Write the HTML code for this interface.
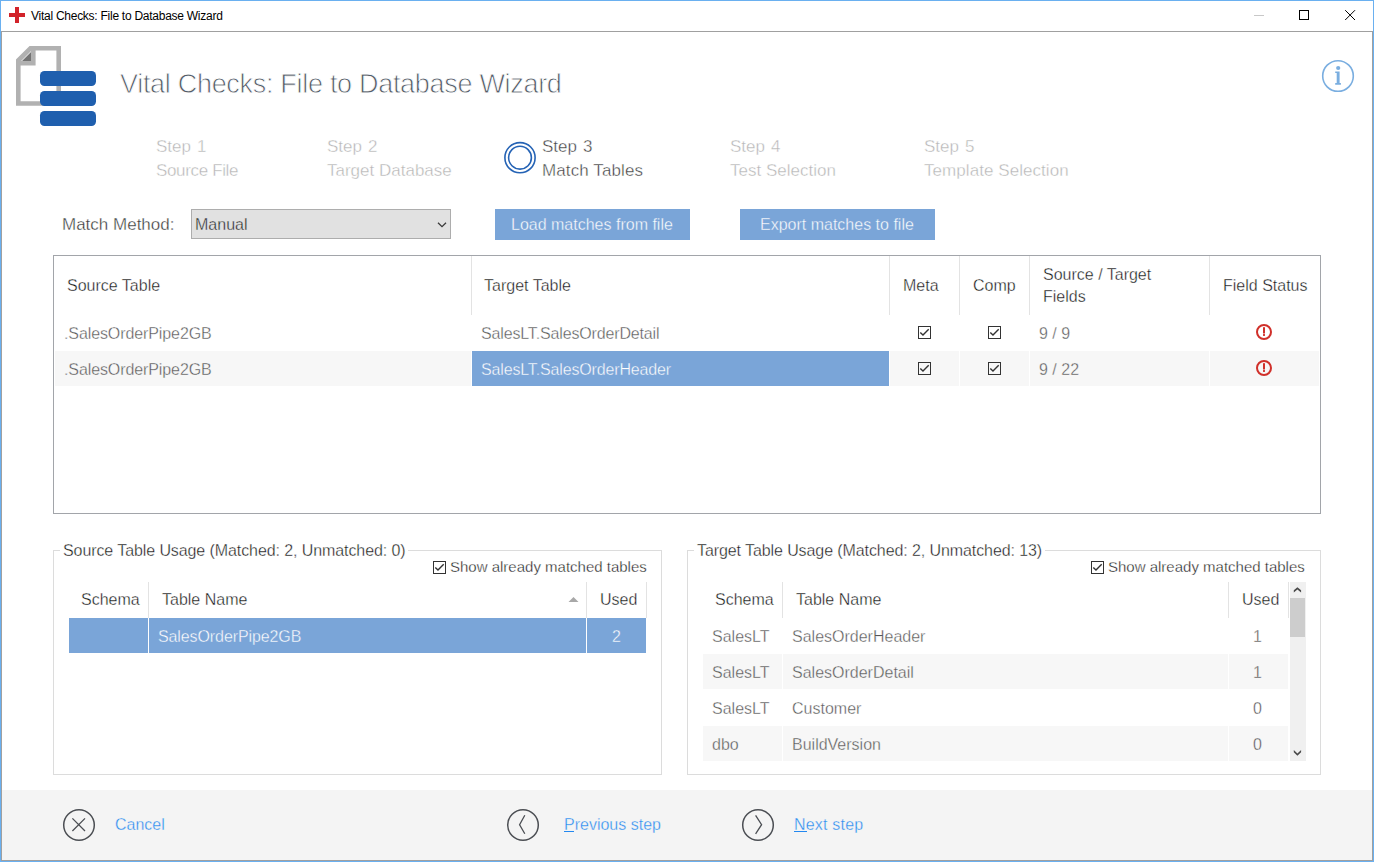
<!DOCTYPE html>
<html><head><meta charset="utf-8">
<style>
html,body{margin:0;padding:0;}
body{width:1374px;height:862px;position:relative;overflow:hidden;background:#fff;font-family:"Liberation Sans",sans-serif;}
.a{position:absolute;}
.t{position:absolute;white-space:nowrap;line-height:1;}
svg.a{overflow:visible;}
</style></head><body>
<div class="a" style="left:0px;top:0px;width:1374px;height:1px;background:#6ab0f0;"></div>
<div class="a" style="left:0px;top:0px;width:1px;height:862px;background:#6ab0f0;"></div>
<div class="a" style="left:1373px;top:0px;width:1px;height:862px;background:#6ab0f0;"></div>
<div class="a" style="left:0px;top:861px;width:1374px;height:1px;background:#6ab0f0;"></div>
<div class="a" style="left:1px;top:31px;width:1372px;height:1px;background:#a0a0a0;"></div>
<div class="a" style="left:1px;top:31px;width:1px;height:830px;background:#a0a0a0;"></div>
<div class="a" style="left:1372px;top:31px;width:1px;height:830px;background:#a0a0a0;"></div>
<div class="a" style="left:1px;top:860px;width:1372px;height:1px;background:#a0a0a0;"></div>
<div class="a" style="left:15px;top:7px;width:4px;height:16px;background:#d2232a;"></div>
<div class="a" style="left:9px;top:13px;width:16px;height:4px;background:#d2232a;"></div>
<div class="t" style="left:31px;top:10px;font-size:12px;color:#000;letter-spacing:-0.26px;">Vital Checks: File to Database Wizard</div>
<div class="a" style="left:1254px;top:15px;width:10px;height:1px;background:#c8c8c8;"></div>
<div class="a" style="left:1299px;top:10px;width:8px;height:8px;border:1px solid #000"></div>
<svg class="a" style="left:1344px;top:9px" width="12" height="12" viewBox="0 0 12 12"><path d="M1.2 1.2 L11 11 M11 1.2 L1.2 11" stroke="#000" stroke-width="1" fill="none"/></svg>
<svg class="a" style="left:0;top:32px" width="110" height="100" viewBox="0 32 110 100">
<path d="M18.3 60.5 L30.5 48.3 L58.7 48.3 L58.7 103.5 L18.3 103.5 Z" fill="none" stroke="#b1b1b1" stroke-width="4.6"/>
<path d="M22 61 L31 52 L31 61 Z" fill="#747474"/>
<path d="M33.3 48 L33.3 63.3 L18 63.3" fill="none" stroke="#b1b1b1" stroke-width="4.6"/>
<rect x="40" y="71" width="56" height="15" rx="4.5" fill="#1f5fae"/>
<rect x="40" y="91" width="56" height="15" rx="4.5" fill="#1f5fae"/>
<rect x="40" y="111" width="56" height="15" rx="4.5" fill="#1f5fae"/>
</svg>
<div class="t" style="left:120px;top:71px;font-size:27px;color:#535b66;letter-spacing:-0.3px;-webkit-text-stroke:0.8px #fff;">Vital Checks: File to Database Wizard</div>
<svg class="a" style="left:1320px;top:58px" width="36" height="36" viewBox="0 0 36 36">
<circle cx="18" cy="18" r="15.3" fill="none" stroke="#7aaee0" stroke-width="1.6"/>
<circle cx="18.2" cy="10" r="2.1" fill="#7aaee0"/>
<path d="M15.2 13.4 L19.6 13.4 L19.6 24.9 L20.9 24.9 L20.9 26.7 L15.2 26.7 L15.2 24.9 L16.7 24.9 L16.7 15 L15.2 15 Z" fill="#7aaee0"/>
</svg>
<div class="t" style="left:156px;top:138px;font-size:17px;color:#b4b4b4;-webkit-text-stroke:0.4px #fff;">Step</div>
<div class="t" style="left:197px;top:138px;font-size:17px;color:#b4b4b4;-webkit-text-stroke:0.4px #fff;">1</div>
<div class="t" style="left:156px;top:162px;font-size:17px;color:#b4b4b4;letter-spacing:-0.35px;-webkit-text-stroke:0.4px #fff;">Source File</div>
<div class="t" style="left:327px;top:138px;font-size:17px;color:#b4b4b4;-webkit-text-stroke:0.4px #fff;">Step</div>
<div class="t" style="left:368px;top:138px;font-size:17px;color:#b4b4b4;-webkit-text-stroke:0.4px #fff;">2</div>
<div class="t" style="left:327px;top:162px;font-size:17px;color:#b4b4b4;-webkit-text-stroke:0.4px #fff;">Target Database</div>
<div class="t" style="left:542px;top:138px;font-size:17px;color:#3a3a3a;-webkit-text-stroke:0.4px #fff;">Step</div>
<div class="t" style="left:583px;top:138px;font-size:17px;color:#3a3a3a;-webkit-text-stroke:0.4px #fff;">3</div>
<div class="t" style="left:542px;top:162px;font-size:17px;color:#3a3a3a;letter-spacing:0.1px;-webkit-text-stroke:0.4px #fff;">Match Tables</div>
<div class="t" style="left:730px;top:138px;font-size:17px;color:#b4b4b4;-webkit-text-stroke:0.4px #fff;">Step</div>
<div class="t" style="left:771px;top:138px;font-size:17px;color:#b4b4b4;-webkit-text-stroke:0.4px #fff;">4</div>
<div class="t" style="left:730px;top:162px;font-size:17px;color:#b4b4b4;-webkit-text-stroke:0.4px #fff;">Test Selection</div>
<div class="t" style="left:924px;top:138px;font-size:17px;color:#b4b4b4;-webkit-text-stroke:0.4px #fff;">Step</div>
<div class="t" style="left:965px;top:138px;font-size:17px;color:#b4b4b4;-webkit-text-stroke:0.4px #fff;">5</div>
<div class="t" style="left:924px;top:162px;font-size:17px;color:#b4b4b4;letter-spacing:0.06px;-webkit-text-stroke:0.4px #fff;">Template Selection</div>
<svg class="a" style="left:500px;top:138px" width="40" height="40" viewBox="0 0 40 40">
<circle cx="20" cy="19.7" r="15.1" fill="none" stroke="#2563b5" stroke-width="1.6"/>
<circle cx="20" cy="19.7" r="11.4" fill="none" stroke="#2563b5" stroke-width="1.6"/>
</svg>
<div class="t" style="left:62px;top:216px;font-size:17px;color:#333;-webkit-text-stroke:0.35px #fff;">Match Method:</div>
<div class="a" style="left:191px;top:209px;width:258px;height:28px;border:1px solid #adadad;background:#e1e1e1"></div>
<div class="t" style="left:195px;top:217px;font-size:16px;color:#222;-webkit-text-stroke:0.35px #e1e1e1;">Manual</div>
<svg class="a" style="left:436px;top:219px" width="12" height="10" viewBox="0 0 12 10"><path d="M2 3.8 L6 7.6 L10 3.8" fill="none" stroke="#3a3a3a" stroke-width="1.3"/></svg>
<div class="a" style="left:495px;top:209px;width:195px;height:31px;background:#7aa5d8;"></div>
<div class="t" style="left:511px;top:217px;font-size:16px;color:#fff;-webkit-text-stroke:0.35px #7aa5d8;">Load matches from file</div>
<div class="a" style="left:740px;top:209px;width:195px;height:31px;background:#7aa5d8;"></div>
<div class="t" style="left:760px;top:217px;font-size:16px;color:#fff;-webkit-text-stroke:0.35px #7aa5d8;">Export matches to file</div>
<div class="a" style="left:53px;top:255px;width:1266px;height:257px;border:1px solid #a2a5aa;background:#fff"></div>
<div class="a" style="left:471px;top:256px;width:1px;height:59px;background:#e3e3e3;"></div>
<div class="a" style="left:889px;top:256px;width:1px;height:59px;background:#e3e3e3;"></div>
<div class="a" style="left:959px;top:256px;width:1px;height:59px;background:#e3e3e3;"></div>
<div class="a" style="left:1029px;top:256px;width:1px;height:59px;background:#e3e3e3;"></div>
<div class="a" style="left:1209px;top:256px;width:1px;height:59px;background:#e3e3e3;"></div>
<div class="t" style="left:67px;top:278px;font-size:16px;color:#111;-webkit-text-stroke:0.35px #fff;">Source Table</div>
<div class="t" style="left:484px;top:278px;font-size:16px;color:#111;-webkit-text-stroke:0.35px #fff;">Target Table</div>
<div class="t" style="left:903px;top:278px;font-size:16px;color:#111;-webkit-text-stroke:0.35px #fff;">Meta</div>
<div class="t" style="left:973px;top:278px;font-size:16px;color:#111;-webkit-text-stroke:0.35px #fff;">Comp</div>
<div class="t" style="left:1043px;top:267px;font-size:16px;color:#111;-webkit-text-stroke:0.35px #fff;">Source / Target</div>
<div class="t" style="left:1043px;top:289px;font-size:16px;color:#111;-webkit-text-stroke:0.35px #fff;">Fields</div>
<div class="t" style="left:1223px;top:278px;font-size:16px;color:#111;-webkit-text-stroke:0.35px #fff;">Field Status</div>
<div class="a" style="left:55px;top:351px;width:416px;height:35px;background:#f7f7f7;"></div>
<div class="a" style="left:472px;top:351px;width:417px;height:35px;background:#7aa5d8;"></div>
<div class="a" style="left:890px;top:351px;width:69px;height:35px;background:#f7f7f7;"></div>
<div class="a" style="left:960px;top:351px;width:69px;height:35px;background:#f7f7f7;"></div>
<div class="a" style="left:1030px;top:351px;width:179px;height:35px;background:#f7f7f7;"></div>
<div class="a" style="left:1210px;top:351px;width:109px;height:35px;background:#f7f7f7;"></div>
<div class="t" style="left:64px;top:326px;font-size:16px;color:#555;letter-spacing:-0.1px;-webkit-text-stroke:0.35px #fff;">.SalesOrderPipe2GB</div>
<div class="t" style="left:481px;top:326px;font-size:16px;color:#555;letter-spacing:-0.15px;-webkit-text-stroke:0.35px #fff;">SalesLT.SalesOrderDetail</div>
<div class="t" style="left:1039px;top:326px;font-size:16px;color:#555;-webkit-text-stroke:0.35px #fff;">9 / 9</div>
<div class="t" style="left:64px;top:362px;font-size:16px;color:#555;letter-spacing:-0.1px;-webkit-text-stroke:0.35px #f7f7f7;">.SalesOrderPipe2GB</div>
<div class="t" style="left:481px;top:362px;font-size:16px;color:#fff;letter-spacing:-0.15px;-webkit-text-stroke:0.35px #7aa5d8;">SalesLT.SalesOrderHeader</div>
<div class="t" style="left:1039px;top:362px;font-size:16px;color:#555;-webkit-text-stroke:0.35px #f7f7f7;">9 / 22</div>
<svg class="a" style="left:918px;top:326px" width="13" height="13" viewBox="0 0 13 13"><rect x="0.5" y="0.5" width="12" height="12" fill="none" stroke="#333" stroke-width="1"/><path d="M2.3 6.4 L5 9 L10.7 3.3" fill="none" stroke="#333" stroke-width="1.4"/></svg>
<svg class="a" style="left:988px;top:326px" width="13" height="13" viewBox="0 0 13 13"><rect x="0.5" y="0.5" width="12" height="12" fill="none" stroke="#333" stroke-width="1"/><path d="M2.3 6.4 L5 9 L10.7 3.3" fill="none" stroke="#333" stroke-width="1.4"/></svg>
<svg class="a" style="left:918px;top:362px" width="13" height="13" viewBox="0 0 13 13"><rect x="0.5" y="0.5" width="12" height="12" fill="none" stroke="#333" stroke-width="1"/><path d="M2.3 6.4 L5 9 L10.7 3.3" fill="none" stroke="#333" stroke-width="1.4"/></svg>
<svg class="a" style="left:988px;top:362px" width="13" height="13" viewBox="0 0 13 13"><rect x="0.5" y="0.5" width="12" height="12" fill="none" stroke="#333" stroke-width="1"/><path d="M2.3 6.4 L5 9 L10.7 3.3" fill="none" stroke="#333" stroke-width="1.4"/></svg>
<svg class="a" style="left:1255px;top:323px" width="18" height="18" viewBox="0 0 18 18"><circle cx="9" cy="9" r="7" fill="none" stroke="#d0302a" stroke-width="2"/><rect x="8" y="4.2" width="2" height="6.3" fill="#d0302a"/><rect x="8" y="11.1" width="2" height="1.8" fill="#d0302a"/></svg>
<svg class="a" style="left:1255px;top:359px" width="18" height="18" viewBox="0 0 18 18"><circle cx="9" cy="9" r="7" fill="none" stroke="#d0302a" stroke-width="2"/><rect x="8" y="4.2" width="2" height="6.3" fill="#d0302a"/><rect x="8" y="11.1" width="2" height="1.8" fill="#d0302a"/></svg>
<div class="a" style="left:53px;top:550px;width:607px;height:223px;border:1px solid #dcdcdc"></div>
<div class="a" style="left:60px;top:540px;width:348px;height:20px;background:#fff;"></div>
<div class="t" style="left:63px;top:543px;font-size:16px;color:#111;letter-spacing:-0.09px;-webkit-text-stroke:0.35px #fff;">Source Table Usage (Matched: 2, Unmatched: 0)</div>
<svg class="a" style="left:433px;top:561px" width="13" height="13" viewBox="0 0 13 13"><rect x="0.5" y="0.5" width="12" height="12" fill="none" stroke="#333" stroke-width="1"/><path d="M2.3 6.4 L5 9 L10.7 3.3" fill="none" stroke="#333" stroke-width="1.4"/></svg>
<div class="t" style="left:450px;top:559px;font-size:15px;color:#111;-webkit-text-stroke:0.35px #fff;">Show already matched tables</div>
<div class="a" style="left:148px;top:582px;width:1px;height:36px;background:#e3e3e3;"></div>
<div class="a" style="left:586px;top:582px;width:1px;height:36px;background:#e3e3e3;"></div>
<div class="a" style="left:646px;top:582px;width:1px;height:36px;background:#e3e3e3;"></div>
<div class="t" style="left:81px;top:592px;font-size:16px;color:#111;-webkit-text-stroke:0.35px #fff;">Schema</div>
<div class="t" style="left:162px;top:592px;font-size:16px;color:#111;-webkit-text-stroke:0.35px #fff;">Table Name</div>
<div class="t" style="left:600px;top:592px;font-size:16px;color:#111;-webkit-text-stroke:0.35px #fff;">Used</div>
<svg class="a" style="left:568px;top:596px" width="11" height="7" viewBox="0 0 11 7"><path d="M0.5 6 L5.5 1 L10.5 6 Z" fill="#a8a8a8"/></svg>
<div class="a" style="left:69px;top:618px;width:79px;height:35px;background:#7aa5d8;"></div>
<div class="a" style="left:149px;top:618px;width:437px;height:35px;background:#7aa5d8;"></div>
<div class="a" style="left:587px;top:618px;width:59px;height:35px;background:#7aa5d8;"></div>
<div class="t" style="left:158px;top:629px;font-size:16px;color:#fff;letter-spacing:-0.1px;-webkit-text-stroke:0.35px #7aa5d8;">SalesOrderPipe2GB</div>
<div class="t" style="left:612px;top:629px;font-size:16px;color:#fff;-webkit-text-stroke:0.35px #7aa5d8;">2</div>
<div class="a" style="left:687px;top:550px;width:632px;height:223px;border:1px solid #dcdcdc"></div>
<div class="a" style="left:694px;top:540px;width:351px;height:20px;background:#fff;"></div>
<div class="t" style="left:697px;top:543px;font-size:16px;color:#111;letter-spacing:-0.09px;-webkit-text-stroke:0.35px #fff;">Target Table Usage (Matched: 2, Unmatched: 13)</div>
<svg class="a" style="left:1091px;top:561px" width="13" height="13" viewBox="0 0 13 13"><rect x="0.5" y="0.5" width="12" height="12" fill="none" stroke="#333" stroke-width="1"/><path d="M2.3 6.4 L5 9 L10.7 3.3" fill="none" stroke="#333" stroke-width="1.4"/></svg>
<div class="t" style="left:1108px;top:559px;font-size:15px;color:#111;-webkit-text-stroke:0.35px #fff;">Show already matched tables</div>
<div class="a" style="left:782px;top:582px;width:1px;height:36px;background:#e3e3e3;"></div>
<div class="a" style="left:1228px;top:582px;width:1px;height:36px;background:#e3e3e3;"></div>
<div class="a" style="left:1288px;top:582px;width:1px;height:36px;background:#e3e3e3;"></div>
<div class="t" style="left:715px;top:592px;font-size:16px;color:#111;-webkit-text-stroke:0.35px #fff;">Schema</div>
<div class="t" style="left:796px;top:592px;font-size:16px;color:#111;-webkit-text-stroke:0.35px #fff;">Table Name</div>
<div class="t" style="left:1242px;top:592px;font-size:16px;color:#111;-webkit-text-stroke:0.35px #fff;">Used</div>
<div class="a" style="left:703px;top:654px;width:79px;height:35px;background:#f7f7f7;"></div>
<div class="a" style="left:783px;top:654px;width:445px;height:35px;background:#f7f7f7;"></div>
<div class="a" style="left:1229px;top:654px;width:59px;height:35px;background:#f7f7f7;"></div>
<div class="a" style="left:703px;top:726px;width:79px;height:35px;background:#f7f7f7;"></div>
<div class="a" style="left:783px;top:726px;width:445px;height:35px;background:#f7f7f7;"></div>
<div class="a" style="left:1229px;top:726px;width:59px;height:35px;background:#f7f7f7;"></div>
<div class="t" style="left:712px;top:629px;font-size:16px;color:#555;-webkit-text-stroke:0.35px #fff;">SalesLT</div>
<div class="t" style="left:792px;top:629px;font-size:16px;color:#555;-webkit-text-stroke:0.35px #fff;">SalesOrderHeader</div>
<div class="t" style="left:1253px;top:629px;font-size:16px;color:#555;-webkit-text-stroke:0.35px #fff;">1</div>
<div class="t" style="left:712px;top:665px;font-size:16px;color:#555;-webkit-text-stroke:0.35px #f7f7f7;">SalesLT</div>
<div class="t" style="left:792px;top:665px;font-size:16px;color:#555;-webkit-text-stroke:0.35px #f7f7f7;">SalesOrderDetail</div>
<div class="t" style="left:1253px;top:665px;font-size:16px;color:#555;-webkit-text-stroke:0.35px #f7f7f7;">1</div>
<div class="t" style="left:712px;top:701px;font-size:16px;color:#555;-webkit-text-stroke:0.35px #fff;">SalesLT</div>
<div class="t" style="left:792px;top:701px;font-size:16px;color:#555;-webkit-text-stroke:0.35px #fff;">Customer</div>
<div class="t" style="left:1253px;top:701px;font-size:16px;color:#555;-webkit-text-stroke:0.35px #fff;">0</div>
<div class="t" style="left:712px;top:737px;font-size:16px;color:#555;-webkit-text-stroke:0.35px #f7f7f7;">dbo</div>
<div class="t" style="left:792px;top:737px;font-size:16px;color:#555;-webkit-text-stroke:0.35px #f7f7f7;">BuildVersion</div>
<div class="t" style="left:1253px;top:737px;font-size:16px;color:#555;-webkit-text-stroke:0.35px #f7f7f7;">0</div>
<div class="a" style="left:1290px;top:582px;width:16px;height:179px;background:#f0f0f0;"></div>
<div class="a" style="left:1290px;top:598px;width:15px;height:39px;background:#cdcdcd;"></div>
<svg class="a" style="left:1290px;top:582px" width="16" height="16" viewBox="0 0 16 16"><path d="M3.8 10.4 L7.4 7.4 L11.1 10.4 L11.1 8.2 L7.4 5.2 L3.8 8.2 Z" fill="#4a4a4a"/></svg>
<svg class="a" style="left:1290px;top:745px" width="16" height="16" viewBox="0 0 16 16"><path d="M3.8 5 L7.4 8.5 L11.1 5 L11.1 7.2 L7.4 10.7 L3.8 7.2 Z" fill="#4a4a4a"/></svg>
<div class="a" style="left:2px;top:790px;width:1370px;height:70px;background:#f4f4f4;"></div>
<svg class="a" style="left:61px;top:807px" width="36" height="36" viewBox="0 0 36 36"><circle cx="18" cy="18" r="15.3" fill="none" stroke="#4b4e53" stroke-width="1.5"/><path d="M11.4 11.4 L24 24 M24 11.4 L11.4 24" stroke="#4b4e53" stroke-width="1.3"/></svg>
<div class="t" style="left:115px;top:817px;font-size:16px;color:#2388f0;-webkit-text-stroke:0.35px #f4f4f4;">Cancel</div>
<svg class="a" style="left:505px;top:807px" width="36" height="36" viewBox="0 0 36 36"><circle cx="18" cy="18" r="15.3" fill="none" stroke="#4b4e53" stroke-width="1.5"/><path d="M19.8 8.3 L14.6 17.7 L19.8 26.8" fill="none" stroke="#4b4e53" stroke-width="1.3"/></svg>
<div class="t" style="left:564px;top:817px;font-size:16px;color:#2388f0;-webkit-text-stroke:0.35px #f4f4f4;">Previous step</div>
<div class="a" style="left:564px;top:831px;width:10px;height:1px;background:#2388f0;"></div>
<svg class="a" style="left:740px;top:807px" width="36" height="36" viewBox="0 0 36 36"><circle cx="18" cy="18" r="15.3" fill="none" stroke="#4b4e53" stroke-width="1.5"/><path d="M15.6 8.3 L21.6 17.7 L15.6 26.8" fill="none" stroke="#4b4e53" stroke-width="1.3"/></svg>
<div class="t" style="left:794px;top:817px;font-size:16px;color:#2388f0;letter-spacing:0.2px;-webkit-text-stroke:0.35px #f4f4f4;">Next step</div>
<div class="a" style="left:794px;top:831px;width:13px;height:1px;background:#2388f0;"></div>
</body></html>
